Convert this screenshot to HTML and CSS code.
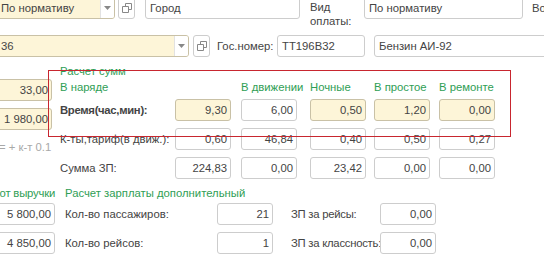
FILE: index.html
```html
<!DOCTYPE html>
<html lang="ru">
<head>
  <meta charset="UTF-8">
  <title>Путевой лист</title>
  <link rel="stylesheet" href="styles.css">
</head>
<body>
  <div class="form">
    <div class="row row-top">
      <div class="field req select w-kind">
        <span class="val">По нормативу</span>
        <span class="drop"><svg width="7" height="4" viewBox="0 0 7 4"><path d="M0 0h7L3.5 4z" fill="#888"/></svg></span>
      </div>
      <button class="open"><svg width="10" height="10" viewBox="0 0 10 10"><path d="M3.5 3V0.5h6v6H7M0.5 3.5h6v6h-6z" fill="none" stroke="#888"/></svg></button>
      <div class="field w-city"><span class="val left">Город</span></div>
      <div class="label two">Вид<br>оплаты:</div>
      <div class="field w-pay"><span class="val left">По нормативу</span></div>
      <div class="label cut">Во</div>
    </div>

    <div class="row row-car">
      <div class="field req select w-car">
        <span class="val">36</span>
        <span class="drop"><svg width="7" height="4" viewBox="0 0 7 4"><path d="M0 0h7L3.5 4z" fill="#888"/></svg></span>
      </div>
      <button class="open"><svg width="10" height="10" viewBox="0 0 10 10"><path d="M3.5 3V0.5h6v6H7M0.5 3.5h6v6h-6z" fill="none" stroke="#888"/></svg></button>
      <div class="label w-gos">Гос.номер:</div>
      <div class="field w-num"><span class="val left">ТТ196В32</span></div>
      <div class="field w-fuel"><span class="val left">Бензин АИ-92</span></div>
    </div>

    <div class="section">
      <div class="side">
        <div class="field req num w-side top-gap">33,00</div>
        <div class="field req num w-side">1 980,00</div>
        <div class="hint">= + к-т 0.1</div>
      </div>
      <div class="calc">
        <div class="title">Расчет сумм</div>
        <div class="cols head">
          <span class="green">В наряде</span>
          <span class="green">В движении</span>
          <span class="green">Ночные</span>
          <span class="green">В простое</span>
          <span class="green">В ремонте</span>
        </div>
        <div class="cols body">
          <span class="label bold">Время(час,мин):</span>
          <div class="field req num">9,30</div>
          <div class="field num">6,00</div>
          <div class="field req num">0,50</div>
          <div class="field req num">1,20</div>
          <div class="field req num">0,00</div>

          <span class="label">К-ты,тариф(в движ.):</span>
          <div class="field num">0,60</div>
          <div class="field num">46,84</div>
          <div class="field num">0,40</div>
          <div class="field num">0,50</div>
          <div class="field num">0,27</div>

          <span class="label">Сумма ЗП:</span>
          <div class="field num">224,83</div>
          <div class="field num">0,00</div>
          <div class="field num">23,42</div>
          <div class="field num">0,00</div>
          <div class="field num">0,00</div>
        </div>
      </div>
    </div>

    <div class="section extra">
      <div class="side wide">
        <div class="title right">от выручки</div>
        <div class="field num w-side2">5 800,00</div>
        <div class="field num w-side2">4 850,00</div>
      </div>
      <div class="calc2">
        <div class="title">Расчет зарплаты дополнительный</div>
        <div class="grid2">
          <span class="label">Кол-во пассажиров:</span>
          <div class="field num">21</div>
          <span class="label pay">ЗП за рейсы:</span>
          <div class="field num">0,00</div>

          <span class="label">Кол-во рейсов:</span>
          <div class="field num">1</div>
          <span class="label pay">ЗП за классность:</span>
          <div class="field num">0,00</div>
        </div>
      </div>
    </div>
  </div>

  <!-- выделение группы -->
  <div class="mark"></div>
</body>
</html>
```

FILE: styles.css
```css
body {
  margin: 0;
  width: 544px;
  height: 261px;
  overflow: hidden;
  position: relative;
  background: #fff;
  font-family: "Liberation Sans", Arial, sans-serif;
  font-size: 11.3px;
  color: #444;
}

.form {
  margin-left: -10px;
}

.row {
  display: flex;
  align-items: flex-start;
  height: 22px;
}

.row > * {
  flex-shrink: 0;
}

.row-top {
  margin-top: -3px;
}

.row-car {
  margin-top: 16px;
}

.field {
  box-sizing: border-box;
  height: 22px;
  border: 1px solid #cdcdcd;
  border-radius: 3px;
  background: #fff;
  display: flex;
  align-items: center;
  white-space: nowrap;
  overflow: hidden;
}

.field.req {
  background: #fdf5d8;
  border-color: #c9c1a6;
}

.field.num {
  justify-content: flex-end;
  padding-right: 3px;
}

.val {
  flex: 1;
  padding-left: 10px;
}

.val.left {
  padding-left: 4px;
}

.drop {
  width: 13px;
  height: 100%;
  border-left: 1px solid #e2e2e2;
  background: #fff;
  display: flex;
  align-items: center;
  justify-content: center;
}

.open {
  box-sizing: border-box;
  width: 17px;
  height: 22px;
  padding: 0;
  border: 1px solid #cdcdcd;
  border-radius: 3px;
  background: #fff;
  display: flex;
  align-items: center;
  justify-content: center;
}

.label {
  white-space: nowrap;
  line-height: 22px;
}

.label.two {
  line-height: 14px;
  margin-top: 3px;
}

.bold {
  font-weight: bold;
  letter-spacing: -0.3px;
}

.w-kind { width: 125px; }
.row-top .open { margin-left: 3px; }
.w-city { width: 155px; margin-left: 10px; }
.row-top .two { width: 54px; margin-left: 10px; }
.w-pay { width: 159px; }
.cut { margin-left: 9px; }

.w-car { width: 199px; }
.row-car .open { margin-left: 4px; }
.w-gos { width: 60px; margin-left: 7px; }
.w-num { width: 88px; }
.w-fuel { width: 200px; margin-left: 9px; }

.section {
  display: flex;
  margin-top: 7px;
}

.side {
  width: 62px;
  flex-shrink: 0;
  display: flex;
  flex-direction: column;
  gap: 7px;
}

.side .top-gap {
  margin-top: 15px;
}

.hint {
  margin-top: 3px;
  padding-left: 9px;
  line-height: 15px;
  color: #a8a8a8;
  white-space: nowrap;
}

.calc {
  margin-left: 8px;
}

.title,
.green {
  color: #2f9e55;
  line-height: 15px;
  white-space: nowrap;
}

.cols {
  display: grid;
  grid-template-columns: 115px 66px 69px 64px 65px 56px;
  align-items: center;
}

.cols.head {
  grid-template-columns: 181px 69px 64px 65px 56px;
  margin-top: 1px;
  margin-bottom: 4px;
}

.cols.body {
  row-gap: 7px;
}

.cols .field {
  width: 56px;
}

.extra {
  margin-top: 7px;
}

.side.wide {
  width: 65px;
  gap: 0;
}

.title.right {
  text-align: right;
  letter-spacing: -0.2px;
  margin-bottom: 2px;
}

.w-side2 {
  margin-bottom: 7px;
}

.calc2 {
  margin-left: 10px;
}

.grid2 {
  display: grid;
  grid-template-columns: 152px 56px 107px 56px;
  row-gap: 7px;
  margin-top: 2px;
}

.grid2 .pay {
  margin-left: 18px;
  letter-spacing: -0.25px;
}

.mark {
  position: absolute;
  left: 48px;
  top: 70px;
  width: 461px;
  height: 65px;
  border: 1px solid #c8262f;
}
```
